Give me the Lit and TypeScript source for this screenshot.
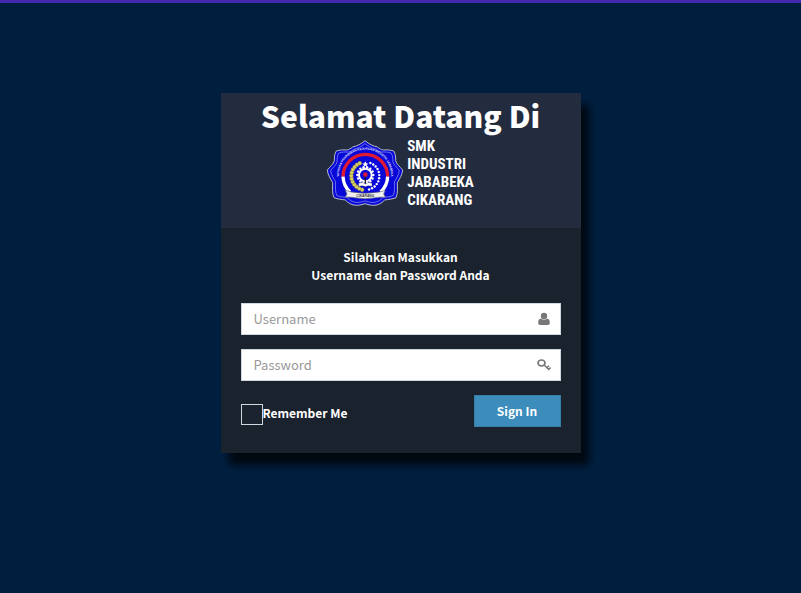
import { LitElement, html, css, svg } from "lit";
import { customElement } from "lit/decorators.js";

const TAU = Math.PI * 2;

@customElement("school-emblem")
class SchoolEmblem extends LitElement {
  static styles = css`
    :host { display: block; }
    svg { display: block; width: 76px; height: 66px; }
    text { font-family: "Liberation Sans", sans-serif; font-weight: 700; }
    .ring { font-size: 9px; fill: #e4e6ff; }
    .scroll { font-size: 10px; fill: #333; }
  `;

  render() {
    const petals =
      "M127 14C140 25 151 30 164 33C171 38 174 41 182 42C194 41 203 42 213 45C219 54 219 64 219 74C221 84 232 92 240 102C239 116 231 128 224 140C224 158 226 172 220 185C208 190 196 190 186 192C178 201 166 208 153 208C142 208 135 205 127 203C119 205 112 208 101 208C88 208 76 201 68 192C58 190 46 190 34 185C28 172 30 158 30 140C23 128 15 116 14 102C22 92 33 84 35 74C35 64 35 54 41 45C51 42 60 41 72 42C80 41 83 38 90 33C103 30 114 25 127 14Z";
    const teeth = Array.from({ length: 14 }, (_, i) => {
      const a = (i / 14) * TAU;
      return svg`<circle cx=${128 + 24 * Math.cos(a)} cy=${117 + 24 * Math.sin(a)} r="3.6" fill="#fff"/>`;
    });
    const grains = Array.from({ length: 12 }, (_, i) => {
      const a = 1.8 + (i / 11) * 2.5;
      return svg`<circle cx=${128 + 42 * Math.cos(a)} cy=${120 + 42 * Math.sin(a)} r="6" fill="#d8cf62" stroke="#77702c"/>`;
    });
    const cotton = Array.from({ length: 12 }, (_, i) => {
      const a = 1.3 - (i / 11) * 2.5;
      return svg`<circle cx=${128 + 42 * Math.cos(a)} cy=${120 + 42 * Math.sin(a)} r="3.6" fill="#fff"/>`;
    });
    return html`
      <svg viewBox="13 12 228 198" role="img" aria-label="Logo SMK Industri Jababeka Cikarang">
        <path d=${petals} fill="#0808d8" stroke="#b9bcc4" stroke-width="3" />
        <path d=${petals} fill="none" stroke="#a9b0ee" stroke-width="2" transform="translate(127 112) scale(.91) translate(-127 -112)" />
        <path id="arc" d="M62 162A78 78 0 1 1 192 162" fill="none" />
        <text class="ring"><textPath href="#arc" startOffset="50%" text-anchor="middle">YAYASAN PENDIDIKAN KEJURUAN INDUSTRI JABABEKA</textPath></text>
        <path d="M61 122A67 67 0 0 1 195 122" fill="none" stroke="#e01830" stroke-width="10" />
        <path d="M61 122A67 67 0 0 0 82 168M195 122A67 67 0 0 1 174 168" fill="none" stroke="#fff" stroke-width="10" />
        ${grains}${cotton}${teeth}
        <circle cx="128" cy="117" r="19" fill="none" stroke="#fff" stroke-width="6" />
        <path d="M128 76l3 6 6 1-5 4 2 6-6-4-6 4 2-6-5-4 6-1z" fill="#fff" />
        <circle cx="128" cy="116" r="7" fill="#d01838" />
        <path d="M128 122V142" stroke="#222" stroke-width="4" />
        <path d="M108 142Q120 136 128 144Q136 136 148 142V151Q136 147 128 152Q120 147 108 151Z" fill="#fff" stroke="#444" />
        <path d="M68 163L86 168Q128 176 170 168L188 163L183 174L188 183L170 184Q128 192 86 184L68 183L73 174Z" fill="#eee" stroke="#667" stroke-width="2" />
        <text class="scroll" x="128" y="184" text-anchor="middle">CIKARANG</text>
      </svg>
    `;
  }
}

@customElement("app-root")
class AppRoot extends LitElement {
  static styles = css`
    :host {
      display: block;
      min-height: 100vh;
      box-sizing: border-box;
      padding: 90px 20px 20px;
      border-top: 3px solid #4328b0;
      background: #001f3f;
      color: #fff;
      font: 700 12px/18px "Noto Sans CJK SC", "Noto Sans", sans-serif;
    }
    .card { max-width: 360px; margin: 0 auto; box-shadow: 8px 12px 8px rgba(0, 0, 0, 0.75); }
    header { background: #232b3f; padding: 4px 0 19px; }
    h1 { margin: 0; text-align: center; font-size: 30px; line-height: 36px; font-weight: 900; }
    .brand { display: flex; justify-content: center; align-items: center; gap: 4px; margin-top: 4px; }
    .name { font: 700 15px/18px "Roboto Condensed", "Noto Sans CJK SC", sans-serif; }
    form { background: #1a222d; padding: 20px 20px 26px; }
    .message { margin: 0 0 19px; text-align: center; }
    .field { display: flex; align-items: center; height: 32px; box-sizing: border-box; margin-bottom: 14px; padding-right: 9px; background: #fff; border: 1px solid #d2d6de; }
    .field input { flex: 1; min-width: 0; border: 0; padding: 0 12px; background: none; color: #555; font: 400 13px/18px "Noto Sans CJK SC", "Noto Sans", sans-serif; outline: none; }
    .field input::placeholder { color: #999; opacity: 1; }
    .field svg { width: 14px; height: 14px; fill: #777; }
    .actions { display: flex; justify-content: space-between; align-items: flex-start; }
    label.remember { display: flex; align-items: flex-start; padding-top: 9px; }
    .remember input { appearance: none; width: 22px; height: 21px; margin: 0; border: 1px solid #d2d6de; }
    .remember input:checked { background: #3c8dbc; }
    button { width: 87px; height: 32px; padding: 0; border: 1px solid #367fa9; background: #3c8dbc; color: #fff; font: inherit; }
  `;

  render() {
    return html`
      <main class="card">
        <header>
          <h1>Selamat Datang Di</h1>
          <div class="brand">
            <school-emblem></school-emblem>
            <div class="name">SMK<br />INDUSTRI<br />JABABEKA<br />CIKARANG</div>
          </div>
        </header>
        <form @submit=${(e: Event) => e.preventDefault()}>
          <p class="message">Silahkan Masukkan<br />Username dan Password Anda</p>
          <div class="field">
            <input type="text" placeholder="Username" aria-label="Username" />
            <svg viewBox="0 0 14 14" aria-hidden="true">
              <circle cx="7" cy="4" r="3.2" />
              <path d="M4 6.6C1.8 7 1.2 8.8 1.2 11c0 1.3.8 2 2 2h7.6c1.2 0 2-.7 2-2 0-2.2-.6-4-2.8-4.4C8.5 8.2 5.5 8.2 4 6.6z" />
            </svg>
          </div>
          <div class="field">
            <input type="password" placeholder="Password" aria-label="Password" />
            <svg viewBox="0 0 14 14" aria-hidden="true">
              <g fill="none" stroke="#777">
                <ellipse cx="4.5" cy="5" rx="3.5" ry="3" stroke-width="1.7" />
                <path d="M7.2 7L12.2 12M10 9.5L12 7.8M11.8 11.3L13.6 9.6" stroke-width="1.5" />
              </g>
            </svg>
          </div>
          <div class="actions">
            <label class="remember"><input type="checkbox" />Remember Me</label>
            <button type="submit">Sign In</button>
          </div>
        </form>
      </main>
    `;
  }
}
